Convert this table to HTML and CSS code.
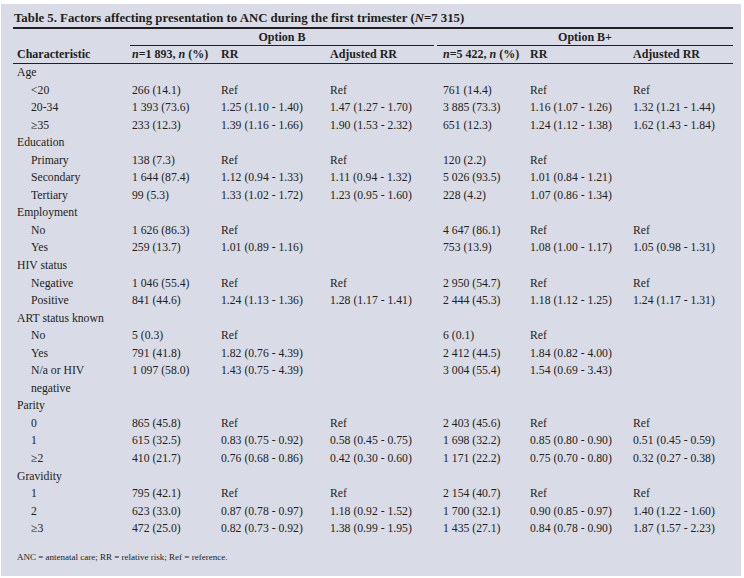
FILE: index.html
```html
<!DOCTYPE html>
<html lang="en">
<head>
<meta charset="utf-8">
<title>Table 5</title>
<link rel="stylesheet" href="styles.css">
</head>
<body>
<div class="panel">
  <div class="title">Table 5. Factors affecting presentation to ANC during the first trimester (<i>N</i>=7 315)</div>
  <table class="data">
    <colgroup>
      <col class="c1"><col class="c2"><col class="c3"><col class="c4"><col class="c5"><col class="c6"><col class="c7">
    </colgroup>
    <thead>
      <tr class="grp">
        <th></th>
        <th colspan="3"><div class="grp-b">Option B</div></th>
        <th colspan="3"><div class="grp-bp">Option B+</div></th>
      </tr>
      <tr class="cols">
        <th>Characteristic</th>
        <th><i>n</i>=1 893, <i>n</i> (%)</th>
        <th>RR</th>
        <th>Adjusted RR</th>
        <th><i>n</i>=5 422, <i>n</i> (%)</th>
        <th>RR</th>
        <th>Adjusted RR</th>
      </tr>
    </thead>
    <tbody>
      <tr><td>Age</td><td></td><td></td><td></td><td></td><td></td><td></td></tr>
      <tr><td class="ind">&lt;20</td><td>266 (14.1)</td><td>Ref</td><td>Ref</td><td>761 (14.4)</td><td>Ref</td><td>Ref</td></tr>
      <tr><td class="ind">20-34</td><td>1 393 (73.6)</td><td>1.25 (1.10 - 1.40)</td><td>1.47 (1.27 - 1.70)</td><td>3 885 (73.3)</td><td>1.16 (1.07 - 1.26)</td><td>1.32 (1.21 - 1.44)</td></tr>
      <tr><td class="ind">≥35</td><td>233 (12.3)</td><td>1.39 (1.16 - 1.66)</td><td>1.90 (1.53 - 2.32)</td><td>651 (12.3)</td><td>1.24 (1.12 - 1.38)</td><td>1.62 (1.43 - 1.84)</td></tr>
      <tr><td>Education</td><td></td><td></td><td></td><td></td><td></td><td></td></tr>
      <tr><td class="ind">Primary</td><td>138 (7.3)</td><td>Ref</td><td>Ref</td><td>120 (2.2)</td><td>Ref</td><td></td></tr>
      <tr><td class="ind">Secondary</td><td>1 644 (87.4)</td><td>1.12 (0.94 - 1.33)</td><td>1.11 (0.94 - 1.32)</td><td>5 026 (93.5)</td><td>1.01 (0.84 - 1.21)</td><td></td></tr>
      <tr><td class="ind">Tertiary</td><td>99 (5.3)</td><td>1.33 (1.02 - 1.72)</td><td>1.23 (0.95 - 1.60)</td><td>228 (4.2)</td><td>1.07 (0.86 - 1.34)</td><td></td></tr>
      <tr><td>Employment</td><td></td><td></td><td></td><td></td><td></td><td></td></tr>
      <tr><td class="ind">No</td><td>1 626 (86.3)</td><td>Ref</td><td></td><td>4 647 (86.1)</td><td>Ref</td><td>Ref</td></tr>
      <tr><td class="ind">Yes</td><td>259 (13.7)</td><td>1.01 (0.89 - 1.16)</td><td></td><td>753 (13.9)</td><td>1.08 (1.00 - 1.17)</td><td>1.05 (0.98 - 1.31)</td></tr>
      <tr><td>HIV status</td><td></td><td></td><td></td><td></td><td></td><td></td></tr>
      <tr><td class="ind">Negative</td><td>1 046 (55.4)</td><td>Ref</td><td>Ref</td><td>2 950 (54.7)</td><td>Ref</td><td>Ref</td></tr>
      <tr><td class="ind">Positive</td><td>841 (44.6)</td><td>1.24 (1.13 - 1.36)</td><td>1.28 (1.17 - 1.41)</td><td>2 444 (45.3)</td><td>1.18 (1.12 - 1.25)</td><td>1.24 (1.17 - 1.31)</td></tr>
      <tr><td>ART status known</td><td></td><td></td><td></td><td></td><td></td><td></td></tr>
      <tr><td class="ind">No</td><td>5 (0.3)</td><td>Ref</td><td></td><td>6 (0.1)</td><td>Ref</td><td></td></tr>
      <tr><td class="ind">Yes</td><td>791 (41.8)</td><td>1.82 (0.76 - 4.39)</td><td></td><td>2 412 (44.5)</td><td>1.84 (0.82 - 4.00)</td><td></td></tr>
      <tr class="top"><td class="ind">N/a or HIV<br>negative</td><td>1 097 (58.0)</td><td>1.43 (0.75 - 4.39)</td><td></td><td>3 004 (55.4)</td><td>1.54 (0.69 - 3.43)</td><td></td></tr>
      <tr><td>Parity</td><td></td><td></td><td></td><td></td><td></td><td></td></tr>
      <tr><td class="ind">0</td><td>865 (45.8)</td><td>Ref</td><td>Ref</td><td>2 403 (45.6)</td><td>Ref</td><td>Ref</td></tr>
      <tr><td class="ind">1</td><td>615 (32.5)</td><td>0.83 (0.75 - 0.92)</td><td>0.58 (0.45 - 0.75)</td><td>1 698 (32.2)</td><td>0.85 (0.80 - 0.90)</td><td>0.51 (0.45 - 0.59)</td></tr>
      <tr><td class="ind">≥2</td><td>410 (21.7)</td><td>0.76 (0.68 - 0.86)</td><td>0.42 (0.30 - 0.60)</td><td>1 171 (22.2)</td><td>0.75 (0.70 - 0.80)</td><td>0.32 (0.27 - 0.38)</td></tr>
      <tr><td>Gravidity</td><td></td><td></td><td></td><td></td><td></td><td></td></tr>
      <tr><td class="ind">1</td><td>795 (42.1)</td><td>Ref</td><td>Ref</td><td>2 154 (40.7)</td><td>Ref</td><td>Ref</td></tr>
      <tr><td class="ind">2</td><td>623 (33.0)</td><td>0.87 (0.78 - 0.97)</td><td>1.18 (0.92 - 1.52)</td><td>1 700 (32.1)</td><td>0.90 (0.85 - 0.97)</td><td>1.40 (1.22 - 1.60)</td></tr>
      <tr><td class="ind">≥3</td><td>472 (25.0)</td><td>0.82 (0.73 - 0.92)</td><td>1.38 (0.99 - 1.95)</td><td>1 435 (27.1)</td><td>0.84 (0.78 - 0.90)</td><td>1.87 (1.57 - 2.23)</td></tr>
    </tbody>
  </table>
  <p class="note">ANC = antenatal care; RR = relative risk; Ref = reference.</p>
</div>
</body>
</html>
```
FILE: styles.css
```css
html, body {
  margin: 0;
  padding: 0;
  background: #ffffff;
}

body {
  font-family: "Liberation Serif", "Times New Roman", serif;
  color: #231f20;
}

.panel {
  margin: 4px 3px 2px 1px;
  height: 572px;
  box-sizing: border-box;
  padding: 6px 8px 0 12px;
  background: #d9dbe6;
}

.title {
  font-weight: bold;
  font-size: 12.8px;
  line-height: 17px;
  padding-left: 1px;
  border-bottom: 2px solid #231f20;
}

.data {
  width: 720px;
  table-layout: fixed;
  border-collapse: collapse;
  border-spacing: 0;
  font-size: 11.7px;
}

.c1 { width: 115px; }
.c2 { width: 89px; }
.c3 { width: 109px; }
.c4 { width: 113px; }
.c5 { width: 87px; }
.c6 { width: 103px; }
.c7 { width: 104px; }

.data th,
.data td {
  padding: 0 0 0 4px;
  text-align: left;
  white-space: nowrap;
  vertical-align: middle;
}

.data th {
  font-weight: bold;
  font-size: 12px;
}

.grp th {
  padding: 0;
  text-align: center;
}

.grp-b,
.grp-bp {
  line-height: 16px;
  border-bottom: 1px solid #231f20;
}

.grp-b {
  margin: 0 5px 0 2px;
}

.grp-bp {
  margin: 0 0 0 -2px;
}

.cols th {
  line-height: 17px;
  border-bottom: 1px solid #231f20;
}

.data td {
  line-height: 17.55px;
}

.data td.ind {
  padding-left: 18px;
}

.top td {
  vertical-align: top;
}

.note {
  margin: 14px 0 0 4px;
  font-size: 9px;
  line-height: 11px;
}
```
